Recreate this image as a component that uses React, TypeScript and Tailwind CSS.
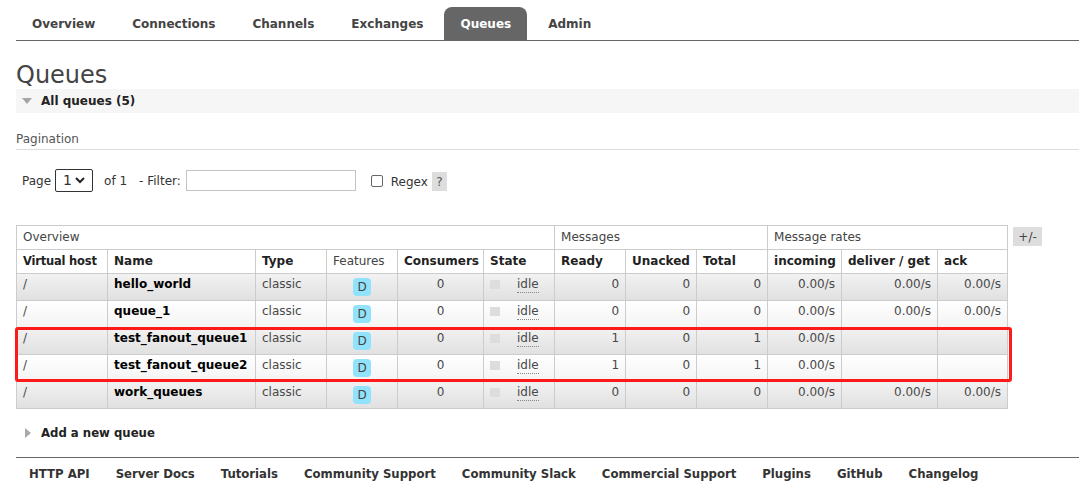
import React from "react";

const tabs = ["Overview", "Connections", "Channels", "Exchanges", "Queues", "Admin"];

type Queue = {
  name: string;
  ready: number;
  unacked: number;
  total: number;
  incoming: string;
  deliver: string;
  ack: string;
};

const queues: Queue[] = [
  { name: "hello_world", ready: 0, unacked: 0, total: 0, incoming: "0.00/s", deliver: "0.00/s", ack: "0.00/s" },
  { name: "queue_1", ready: 0, unacked: 0, total: 0, incoming: "0.00/s", deliver: "0.00/s", ack: "0.00/s" },
  { name: "test_fanout_queue1", ready: 1, unacked: 0, total: 1, incoming: "0.00/s", deliver: "", ack: "" },
  { name: "test_fanout_queue2", ready: 1, unacked: 0, total: 1, incoming: "0.00/s", deliver: "", ack: "" },
  { name: "work_queues", ready: 0, unacked: 0, total: 0, incoming: "0.00/s", deliver: "0.00/s", ack: "0.00/s" },
];

const footerLinks = [
  "HTTP API",
  "Server Docs",
  "Tutorials",
  "Community Support",
  "Community Slack",
  "Commercial Support",
  "Plugins",
  "GitHub",
  "Changelog",
];

const colWidths = [91, 148, 71, 71, 86, 71, 71, 71, 71, 74, 96, 70];

const th = "border border-[#ccc] px-[6px] text-left align-middle whitespace-nowrap leading-[15px]";
const td = "border border-[#ccc] px-[6px] align-top pt-[3px] leading-[15px] whitespace-nowrap";

export default function App() {
  return (
    <div className="min-h-screen bg-white pl-4 font-['DejaVu_Sans','Verdana',sans-serif] text-[12px] text-[#484848]">
      {/* Tabs */}
      <nav className="flex gap-[5px] border-b border-[#666] pt-[7px]">
        {tabs.map((t) => (
          <div
            key={t}
            className={`flex h-[33px] items-center rounded-t-[8px] px-4 font-bold ${
              t === "Queues" ? "bg-[#666] text-white" : "text-[#444]"
            }`}
          >
            {t}
          </div>
        ))}
      </nav>

      <h1 className="mt-[20px] text-[24px] leading-[28px] text-[#444]">Queues</h1>

      {/* All queues bar */}
      <div className="flex h-[24px] items-center bg-[#f6f6f6] pl-[6px]">
        <svg width="10" height="7" viewBox="0 0 10 7" className="mr-[9px]">
          <polygon points="0,0 10,0 5,6" fill="#a5a5a5" />
        </svg>
        <span className="font-bold text-[#222]">All queues (5)</span>
      </div>

      {/* Pagination */}
      <div className="mt-[18px] border-b border-[#ddd] pb-[2px] leading-[16px] text-[#555]">Pagination</div>

      <div className="mt-[19px] flex h-[23px] items-center pl-[6px] text-[#333]">
        <span>Page</span>
        <div className="ml-[4px] flex h-[23px] w-[38px] items-center justify-between rounded-[2px] border border-[#333] px-[7px]">
          <span className="text-[14px]">1</span>
          <svg width="10" height="7" viewBox="0 0 10 7">
            <polyline points="1,1 5,5 9,1" fill="none" stroke="#222" strokeWidth="2" />
          </svg>
        </div>
        <span className="ml-[11px]">of 1</span>
        <span className="ml-[12px]">- Filter:</span>
        <div className="ml-[5px] h-[21px] w-[170px] border border-[#c4c4c4]" />
        <div className="ml-[15px] h-[12px] w-[12px] rounded-[2px] border border-[#666]" />
        <span className="ml-[8px] mt-[3px]">Regex</span>
        <span className="ml-[4px] mt-[2px] flex h-[19px] w-[15px] items-center justify-center bg-[#ddd] text-[#555]">
          ?
        </span>
      </div>

      {/* Table */}
      <div className="mt-[33px] flex items-start gap-[5px]">
        <div className="relative">
          <table className="w-[991px] table-fixed border-collapse">
            <colgroup>
              {colWidths.map((w, i) => (
                <col key={i} style={{ width: w }} />
              ))}
            </colgroup>
            <thead>
              <tr className="h-[24px] bg-white text-[#444]">
                <th colSpan={6} className={`${th} font-normal`}>Overview</th>
                <th colSpan={3} className={`${th} font-normal`}>Messages</th>
                <th colSpan={3} className={`${th} font-normal`}>Message rates</th>
              </tr>
              <tr className="h-[24px] bg-white text-[#222]">
                <th className={`${th} text-[11.5px] tracking-[-0.2px]`}>Virtual host</th>
                <th className={th}>Name</th>
                <th className={th}>Type</th>
                <th className={`${th} font-normal text-[#444]`}>Features</th>
                <th className={th}>Consumers</th>
                <th className={th}>State</th>
                <th className={th}>Ready</th>
                <th className={th}>Unacked</th>
                <th className={th}>Total</th>
                <th className={th}>incoming</th>
                <th className={th}>deliver / get</th>
                <th className={th}>ack</th>
              </tr>
            </thead>
            <tbody>
              {queues.map((q, i) => (
                <tr
                  key={q.name}
                  className={`h-[27px] ${
                    i % 2 === 0
                      ? "bg-linear-to-b from-[#f2f2f2] to-[#e0e0e0]"
                      : "bg-linear-to-b from-[#ffffff] to-[#f3f3f3]"
                  }`}
                >
                  <td className={td}>/</td>
                  <td className={`${td} font-bold text-black`}>{q.name}</td>
                  <td className={td}>classic</td>
                  <td className={td}>
                    <div className="mx-auto mt-[1px] flex h-[18px] w-[18px] items-center justify-center rounded-[4px] bg-[#90e3fb] text-[#444]">
                      D
                    </div>
                  </td>
                  <td className={`${td} text-center`}>0</td>
                  <td className={td}>
                    <div className="flex items-start">
                      <span className="mt-[3px] h-[9px] w-[10px] bg-[#ddd]" />
                      <span className="ml-[17px] border-b border-dotted border-[#888] leading-[15px]">idle</span>
                    </div>
                  </td>
                  <td className={`${td} text-right`}>{q.ready}</td>
                  <td className={`${td} text-right`}>{q.unacked}</td>
                  <td className={`${td} text-right`}>{q.total}</td>
                  <td className={`${td} text-right`}>{q.incoming}</td>
                  <td className={`${td} text-right`}>{q.deliver}</td>
                  <td className={`${td} text-right`}>{q.ack}</td>
                </tr>
              ))}
            </tbody>
          </table>
          {/* annotation box over rows 3-4 */}
          <div className="pointer-events-none absolute left-[-1px] top-[102px] h-[55px] w-[997px] rounded-[3px] border-[3px] border-[#ff1a1a]" />
        </div>
        <div className="mt-[2px] flex h-[19px] w-[29px] items-center justify-center bg-[#ddd] text-[#444]">+/-</div>
      </div>

      {/* Add a new queue */}
      <div className="mt-[16px] flex items-center leading-[16px]">
        <svg width="6" height="10" viewBox="0 0 6 10" className="ml-[9px] mr-[10px]">
          <polygon points="0,0 6,5 0,10" fill="#aaa" />
        </svg>
        <span className="font-['DejaVu_Sans_Condensed','DejaVu_Sans',sans-serif] text-[13px] font-bold text-[#222]">
          Add a new queue
        </span>
      </div>

      {/* Footer */}
      <footer className="mt-[16px] flex gap-[26px] border-t border-[#666] pl-[13px] pt-[8px] font-['DejaVu_Sans_Condensed','DejaVu_Sans',sans-serif] text-[13px] font-bold leading-[16px] text-[#333]">
        {footerLinks.map((l) => (
          <span key={l}>{l}</span>
        ))}
      </footer>
    </div>
  );
}
